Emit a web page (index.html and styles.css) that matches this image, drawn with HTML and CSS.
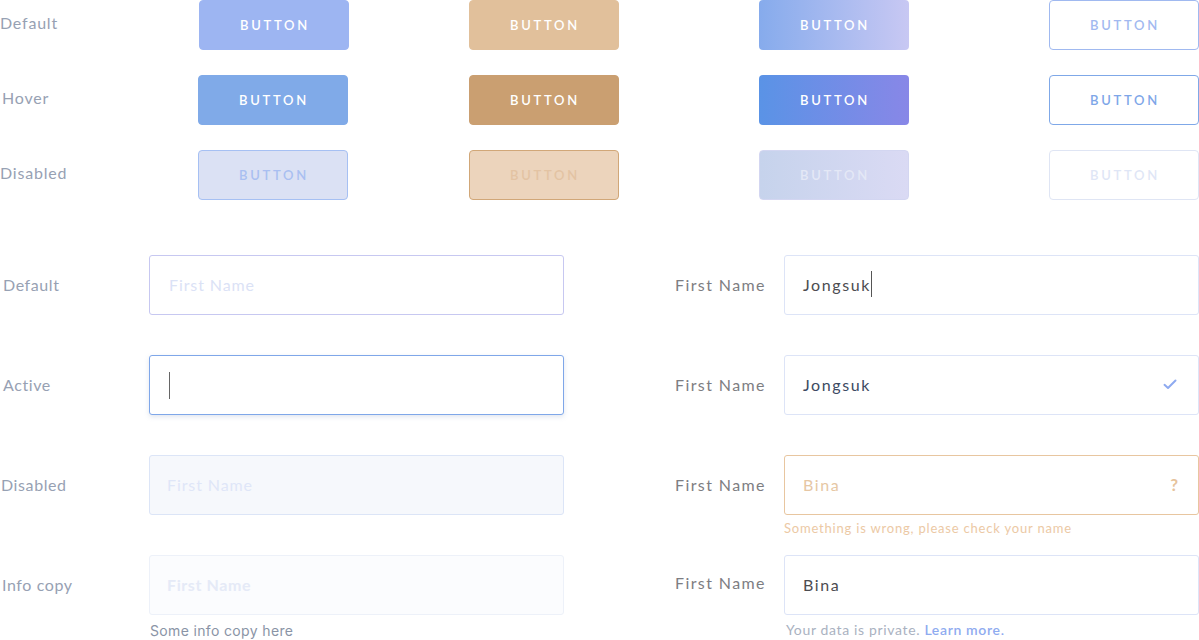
FILE: index.html
```html
<!DOCTYPE html>
<html>
<head>
<meta charset="utf-8">
<link rel="stylesheet" href="styles.css">
</head>
<body>
<div class="page">
  <section class="buttons">
    <div class="row-label">Default</div>
    <button class="btn blue">BUTTON</button>
    <button class="btn tan">BUTTON</button>
    <button class="btn grad">BUTTON</button>
    <button class="btn outline">BUTTON</button>

    <div class="row-label hover-label">Hover</div>
    <button class="btn blue hover">BUTTON</button>
    <button class="btn tan hover">BUTTON</button>
    <button class="btn grad hover">BUTTON</button>
    <button class="btn outline hover">BUTTON</button>

    <div class="row-label">Disabled</div>
    <button class="btn blue disabled">BUTTON</button>
    <button class="btn tan disabled">BUTTON</button>
    <button class="btn grad disabled">BUTTON</button>
    <button class="btn outline disabled">BUTTON</button>
  </section>

  <section class="fields">
    <div class="col left">
      <div class="field">
        <div class="f-label">Default</div>
        <div class="f-box">
          <div class="input default"><span class="ph">First Name</span></div>
        </div>
      </div>
      <div class="field">
        <div class="f-label">Active</div>
        <div class="f-box">
          <div class="input active"><span class="caret tall"></span></div>
        </div>
      </div>
      <div class="field">
        <div class="f-label tight">Disabled</div>
        <div class="f-box">
          <div class="input disabled"><span class="ph dis">First Name</span></div>
        </div>
      </div>
      <div class="field">
        <div class="f-label mid">Info copy</div>
        <div class="f-box">
          <div class="input info"><span class="ph info-ph">First Name</span></div>
          <div class="help info-help">Some info copy here</div>
        </div>
      </div>
    </div>

    <div class="col right">
      <div class="field">
        <div class="f-label r">First Name</div>
        <div class="f-box">
          <div class="input plain"><span class="val">Jongsuk</span><span class="caret"></span></div>
        </div>
      </div>
      <div class="field">
        <div class="f-label r">First Name</div>
        <div class="f-box">
          <div class="input plain"><span class="val navy">Jongsuk</span>
            <svg class="icon check" width="14" height="11" viewBox="0 0 14 11"><path d="M1.5 5.8 L5 9 L12.5 1.5" fill="none" stroke="#8eaaf0" stroke-width="2" stroke-linecap="round" stroke-linejoin="round"/></svg>
          </div>
        </div>
      </div>
      <div class="field">
        <div class="f-label r">First Name</div>
        <div class="f-box">
          <div class="input error"><span class="val tanv">Bina</span><span class="icon q">?</span></div>
          <div class="help err-help">Something is wrong, please check your name</div>
        </div>
      </div>
      <div class="field last">
        <div class="f-label r up">First Name</div>
        <div class="f-box">
          <div class="input plain"><span class="val">Bina</span></div>
          <div class="help priv">Your data is private. <a class="more">Learn more.</a></div>
        </div>
      </div>
    </div>
  </section>
</div>
</body>
</html>
```

FILE: styles.css
```css
* { box-sizing: border-box; }
html, body { margin: 0; padding: 0; background: #ffffff; }
body {
  font-family: "Lato", "Open Sans", sans-serif;
  width: 1199px;
  height: 640px;
  overflow: hidden;
}
.page { display: flex; flex-direction: column; }

/* Buttons */
.buttons {
  display: grid;
  grid-template-columns: 199px 270px 290px 290px 150px;
  grid-auto-rows: 50px;
  row-gap: 25px;
  align-items: center;
}
.row-label {
  font-size: 16px;
  color: #97a1b3;
  letter-spacing: 0.8px;
  padding-bottom: 5px;
}
.hover-label { padding-left: 2px; }
.btn {
  width: 150px;
  height: 50px;
  border-radius: 4px;
  border: 1px solid transparent;
  font-family: "Lato", sans-serif;
  font-size: 13px;
  font-weight: 600;
  letter-spacing: 2.7px;
  color: #ffffff;
  padding: 0 0 0 2px;
  display: flex;
  align-items: center;
  justify-content: center;
}
.btn.blue { background: #9db5f2; border-color: #9db5f2; }
.btn.blue.hover { background: #80aae8; border-color: #80aae8; margin-left: -1px; }
.btn.blue.disabled { background: #dbe1f4; border-color: #a6c0f3; color: #a9bff1; margin-left: -1px; }
.btn.tan { background: #e1c09b; border-color: #e1c09b; }
.btn.tan.hover { background: #ca9f71; border-color: #ca9f71; }
.btn.tan.disabled { background: #ecd4bc; border-color: #d1a778; color: #e3c3a3; }
.btn.grad { background: linear-gradient(90deg, #86abec, #c8c8f3); border: none; }
.btn.grad.hover { background: linear-gradient(90deg, #5a93e6, #8887e7); }
.btn.grad.disabled { background: linear-gradient(90deg, #c6d3ec, #dadaf4); color: #e4e8f6; border: 1px solid #d3d6f1; }
.btn.outline { background: #ffffff; border-color: #a0b9f0; color: #a2b9f0; }
.btn.outline.hover { border-color: #7fa8e8; color: #7ea6e8; }
.btn.outline.disabled { border-color: #dfe5f4; color: #dfe6f6; }

/* Fields */
.fields {
  display: flex;
  margin-top: 55px;
}
.col { display: flex; flex-direction: column; }
.col.left { width: 564px; margin-right: 111px; }
.col.right { width: 524px; }
.field {
  display: flex;
  height: 100px;
}
.f-label {
  height: 60px;
  display: flex;
  align-items: center;
  font-size: 16px;
  color: #97a1b3;
  letter-spacing: 0.6px;
  width: 149px;
  padding-left: 3px;
  padding-bottom: 1px;
}
.f-label.tight { padding-left: 1px; }
.f-label.mid { padding-left: 2px; }
.f-label.r {
  width: 109px;
  padding-left: 0;
  color: #7d7d82;
  letter-spacing: 1.4px;
}
.f-label.up { height: 56px; }
.f-box { display: flex; flex-direction: column; width: 415px; }
.input {
  height: 60px;
  border: 1px solid #dde4f7;
  border-radius: 3px;
  display: flex;
  align-items: center;
  padding: 0 18px 2px 19px;
  font-size: 16px;
  background: #ffffff;
}
.input.plain, .input.error { padding-left: 18px; }
.input.default { border-color: #c7c8f1; }
.input.active { border-color: #7fa7e9; box-shadow: 0 2px 5px rgba(120, 140, 180, 0.22); padding-bottom: 0; }
.input.disabled { background: #f6f8fc; border-color: #dce5f7; padding-left: 17px; }
.input.info { background: #fbfcfe; border-color: #edf1f9; padding-left: 17px; }
.input.error { border-color: #e8c6a0; }
.ph { color: #dbe2f6; letter-spacing: 0.9px; }
.ph.dis { color: #dfe6f8; }
.ph.info-ph { color: #e5eaf7; font-weight: 700; letter-spacing: 0.6px; }
.val { color: #4c4c50; letter-spacing: 1.6px; }
.val.navy { color: #3c4a62; }
.val.tanv { color: #e6c7a4; }
.caret {
  display: inline-block;
  width: 1px;
  height: 26px;
  background: #555;
  margin-left: 0;
}
.caret.tall { height: 27px; margin-left: 0; background: #666; }
.icon { margin-left: auto; }
.check { margin-right: 3px; }
.q {
  color: #e6c39c;
  font-weight: 700;
  font-size: 17px;
  margin-right: 2px;
}
.help { font-size: 14px; }
.info-help {
  margin-top: 7px;
  padding-left: 1px;
  color: #8a94a6;
  font-family: "Inter", sans-serif;
  font-size: 14px;
  letter-spacing: 0.35px;
}
.err-help {
  margin-top: 5px;
  color: #ecc9a5;
  font-size: 13px;
  letter-spacing: 0.8px;
}
.priv {
  margin-top: 6px;
  padding-left: 2px;
  color: #aab2c1;
  letter-spacing: 0.65px;
}
.more { color: #8fabf0; font-weight: 600; }
```
